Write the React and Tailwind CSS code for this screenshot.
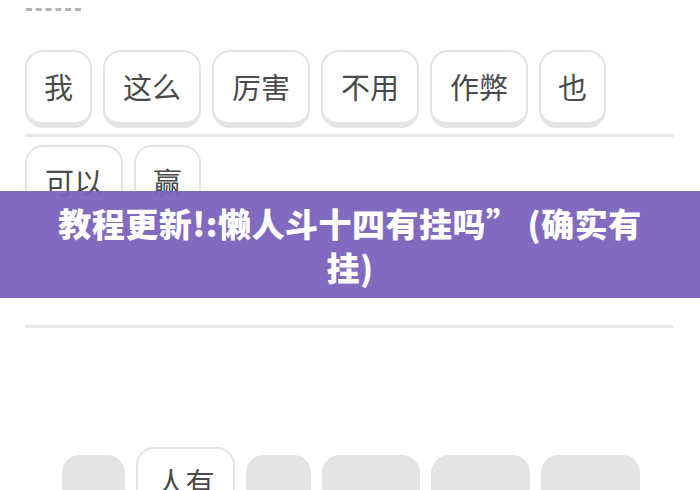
const row1 = ['我', '这么', '厉害', '不用', '作弊', '也']
const row2 = ['可以', '赢']
const pool = [
  { text: '', w: 'w-[63px]' },
  { text: '人有', w: 'w-[99px]', picked: true },
  { text: '', w: 'w-[65px]' },
  { text: '', w: 'w-[98px]' },
  { text: '', w: 'w-[99px]' },
  { text: '', w: 'w-[99px]' },
]

const cjk = { fontFamily: '"Noto Sans CJK SC", "Noto Sans", sans-serif' }

function Chip({ text }) {
  return (
    <div className={`${text.length > 1 ? 'w-[98px]' : 'w-[67px]'} h-[78px] flex items-center justify-center rounded-[18px] border-2 border-b-[6px] border-[#e4e4e4] bg-white text-[29px] text-[#4a4a4a] leading-none pb-[2px]`}>
      {text}
    </div>
  )
}

function AnswerRow({ words }) {
  return (
    <div>
      <div className="flex gap-[11px] h-[78px]">
        {words.map((w, i) => <Chip key={i} text={w} />)}
      </div>
      <div className="mt-[6px] h-[3px] bg-[#e8e8e8] rounded-full" />
    </div>
  )
}

export default function App() {
  return (
    <div className="relative w-[700px] h-[490px] overflow-hidden bg-white" style={cjk}>
      <div className="px-[25px]">
        <div className="h-[11px] flex items-end pl-px">
          <div className="w-[55px] border-b-[3px] border-dashed border-[#b4b4b4]" />
        </div>

        <div className="mt-[39px] w-[649px] flex flex-col gap-[8px]">
          <AnswerRow words={row1} />
          <AnswerRow words={row2} />
          <div className="h-[77px]" />
          <div className="h-[3px] bg-[#e8e8e8] rounded-full" />
        </div>
      </div>

      {/* word pool, first card already moved up */}
      <div className="mt-[127px] flex gap-[11px] pl-[62px] items-start">
        {pool.map((p, i) =>
          p.picked ? (
            <div key={i} className={`${p.w} h-[60px] -mt-[8px] rounded-t-[18px] border-2 border-b-0 border-[#e4e4e4] bg-white flex justify-center pt-[18px] text-[29px] text-[#4a4a4a] leading-none`}>
              {p.text}
            </div>
          ) : (
            <div key={i} className={`${p.w} h-[40px] rounded-t-[18px] bg-[#e4e4e4]`} />
          )
        )}
      </div>

      <div className="absolute left-0 right-0 top-[191px] h-[107px] bg-[#7c62be]/95 flex items-center justify-center px-[50px]">
        <p className="text-center text-white font-black text-[33px] leading-[44px] tracking-[0.5px]">
          教程更新!:懒人斗十四有挂吗” (确实有挂)
        </p>
      </div>
    </div>
  )
}
